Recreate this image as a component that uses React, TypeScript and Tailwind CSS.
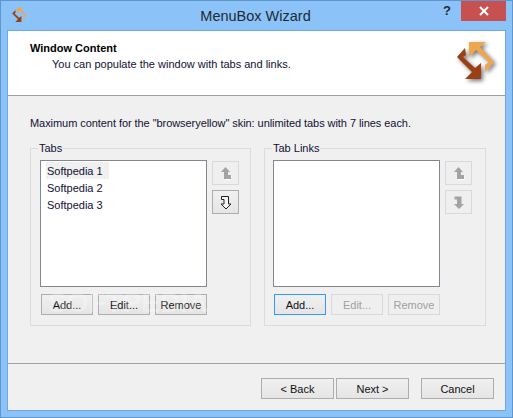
const font = "[font-family:'Liberation_Sans',sans-serif]";

function LogoArrows({ size, shadow }: { size: number; shadow?: boolean }) {
  return (
    <svg
      width={size}
      height={size}
      viewBox="4 0 44 44"
      className={shadow ? "drop-shadow-[2px_2px_2px_rgba(0,0,0,0.55)]" : ""}
    >
      <polygon fill="#eca750" points="19,2 36,2 30,7 44,22 35,32 35,25 39,22 26,10 19,17" />
      <polygon fill="#9a4015" points="31,39 15,39 22,32 7,17 15,8 16,15 13,17 25,28 31,23" />
    </svg>
  );
}

function ArrowUp({ color }: { color: string }) {
  return (
    <svg width="12" height="14" viewBox="0 0 12 14">
      <path d="M8 10h3v3.5H5" fill="none" stroke="#ffffff" strokeWidth="1" />
      <polygon fill={color} points="1,6 5.5,1 10,6 8,6 8,9 11,9 11,13 4,13 4,6" />
    </svg>
  );
}

function ArrowDown({ enabled }: { enabled: boolean }) {
  return (
    <svg width="12" height="15" viewBox="0 0 12 15">
      <polygon
        fill={enabled ? "#f4f4f4" : "#a3a3a3"}
        stroke={enabled ? "#222222" : "none"}
        points="1.5,1.5 8.5,1.5 8.5,9 11,9 6,14 1,9 4,9 4,4.5 1.5,4.5"
      />
    </svg>
  );
}

function Btn({
  label,
  disabled,
  focused,
  wide,
}: {
  label: string;
  disabled?: boolean;
  focused?: boolean;
  wide?: boolean;
}) {
  let tone = "border-[#adadad] bg-linear-to-b from-[#f0f0f0] to-[#e5e5e5] text-[#111111]";
  if (disabled) tone = "border-[#d9d9d9] bg-[#efefef] text-[#a0a0a0]";
  if (focused) tone = "border-[#3399ff] bg-linear-to-b from-[#f0f0f0] to-[#e5e5e5] text-[#111111]";
  return (
    <div
      className={`flex h-[21px] items-center justify-center border pt-[1px] text-[11px] ${wide ? "w-[73px]" : "w-[52px]"} ${tone}`}
    >
      {label}
    </div>
  );
}

function ArrowBtn({ disabled, children }: { disabled?: boolean; children: React.ReactNode }) {
  return (
    <div
      className={`flex h-[24px] w-[27px] items-center justify-center border ${
        disabled ? "border-[#d9d9d9] bg-[#efefef]" : "border-[#adadad] bg-linear-to-b from-[#f0f0f0] to-[#e5e5e5]"
      }`}
    >
      {children}
    </div>
  );
}

function Group({
  title,
  width,
  pad,
  items,
  upDisabled,
  downDisabled,
  buttons,
}: {
  title: string;
  width: string;
  pad: string;
  items: string[];
  upDisabled: boolean;
  downDisabled: boolean;
  buttons: React.ReactNode;
}) {
  return (
    <fieldset className={`h-[185px] border border-[#dcdcdc] ${width}`}>
      <legend className="ml-[7px] h-[14px] px-[1px] text-[11px] leading-[14px] text-[#111133]">{title}</legend>
      <div className={pad}>
        <div className="mt-[5px] flex">
          <div className="h-[127px] w-[167px] border border-[#828790] bg-white pt-[1px] pl-[5px]">
            {items.map((item, i) => (
              <div
                key={item}
                className={`h-[17px] w-[63px] pl-[1px] text-[11px] leading-[18px] text-[#111133] ${i === 0 ? "bg-[#f0f0f0]" : ""}`}
              >
                {item}
              </div>
            ))}
          </div>
          <div className="mt-[1px] ml-[5px] flex flex-col gap-[5px]">
            <ArrowBtn disabled={upDisabled}>
              <ArrowUp color="#a3a3a3" />
            </ArrowBtn>
            <ArrowBtn disabled={downDisabled}>
              <ArrowDown enabled={!downDisabled} />
            </ArrowBtn>
          </div>
        </div>
        <div className="mt-[7px] ml-[1px] flex gap-[5px]">{buttons}</div>
      </div>
    </fieldset>
  );
}

export default function App() {
  return (
    <div className={`relative flex h-[418px] w-[513px] flex-col overflow-hidden border border-[#5f97cc] bg-[#8bc3f8] ${font}`}>
      {/* title bar */}
      <div className="flex h-[30px] items-start">
        <div className="mt-[6px] ml-[10px]">
          <LogoArrows size={17} />
        </div>
        <div className="mt-[5px] flex-1 pl-[40px] text-center text-[14.5px] leading-[20px] text-[#1f2a35]">MenuBox Wizard</div>
        <div className="mt-[1px] w-[10px] text-[13px] leading-[18px] font-bold text-[#1f2a35]">?</div>
        <div className="mr-[6px] ml-[8px] flex h-[20px] w-[45px] items-center justify-center bg-[#c75050]">
          <svg width="10" height="10" viewBox="0 0 10 10">
            <path d="M1 1l8 8M9 1l-8 8" stroke="#ffffff" strokeWidth="2" />
          </svg>
        </div>
      </div>

      {/* client area */}
      <div className="mx-[7px] mb-[7px] flex flex-1 flex-col bg-[#f0f0f0] shadow-[0_0_0_1px_#6fa8dc]">
        <div className="flex h-[65px] border-b border-[#a0a0a0] bg-white">
          <div className="flex-1 pt-[9px] pl-[22px]">
            <div className="text-[11px] leading-[16px] font-bold text-black">Window Content</div>
            <div className="pl-[22px] text-[11px] leading-[16px] text-[#111133]">You can populate the window with tabs and links.</div>
          </div>
          <div className="mt-[9px] mr-[7px]">
            <LogoArrows size={44} shadow />
          </div>
        </div>

        <div className="flex-1 pt-[20px] pl-[22px]">
          <div className="text-[11px] leading-[15px] tracking-[-0.06px] text-[#111133]">
            Maximum content for the "browseryellow" skin: unlimited tabs with 7 lines each.
          </div>
          <div className="mt-[10px] flex gap-[13px]">
            <Group
              title="Tabs"
              width="w-[221px]"
              pad="pl-[9px]"
              items={["Softpedia 1", "Softpedia 2", "Softpedia 3"]}
              upDisabled
              downDisabled={false}
              buttons={
                <>
                  <Btn label="Add..." />
                  <Btn label="Edit..." />
                  <Btn label="Remove" />
                </>
              }
            />
            <Group
              title="Tab Links"
              width="w-[222px]"
              pad="pl-[8px]"
              items={[]}
              upDisabled
              downDisabled
              buttons={
                <>
                  <Btn label="Add..." focused />
                  <Btn label="Edit..." disabled />
                  <Btn label="Remove" disabled />
                </>
              }
            />
          </div>
        </div>

        <div className="flex h-[47px] justify-end border-t border-[#a0a0a0] pt-[14px] pr-[11px]">
          <div className="flex gap-[2px]">
            <Btn label="< Back" wide />
            <Btn label="Next >" wide />
          </div>
          <div className="ml-[12px]">
            <Btn label="Cancel" wide />
          </div>
        </div>
      </div>

      {/* watermark */}
      <div className="pointer-events-none absolute top-[286px] left-[47px] text-[28px] leading-[32px] font-bold text-white/25">
        SOFTPEDIA
      </div>
    </div>
  );
}
